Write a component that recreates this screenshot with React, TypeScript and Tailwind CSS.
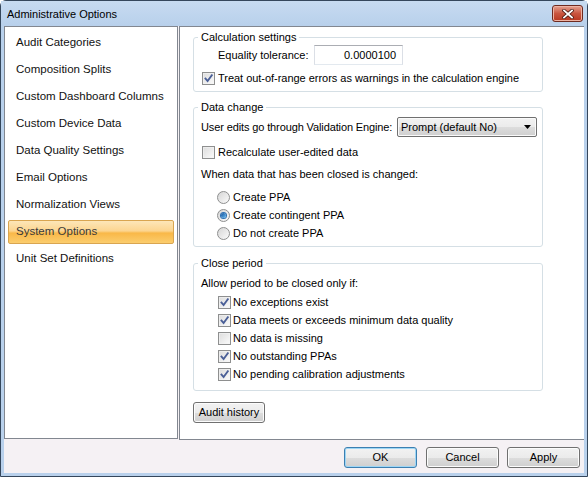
import React from "react";

const font = { fontFamily: '"Liberation Sans", Arial, sans-serif' };

function Check({ on }: { on: boolean }) {
  return (
    <span className="relative flex h-[13px] w-[13px] shrink-0 items-center justify-center border border-[#8e8f8f] bg-gradient-to-br from-[#dcdcdc] to-[#fbfbfb]">
      <span className="flex h-[11px] w-[11px] items-center justify-center border border-[#f4f4f4]/60">
        {on && (
          <svg width="11" height="11" viewBox="0 0 11 11" className="absolute left-[0px] top-[0px]">
            <path d="M2.5 5.5 L4.6 8 L8.8 2.3" fill="none" stroke="#4a5f97" strokeWidth="1.9" strokeLinecap="square" />
          </svg>
        )}
      </span>
    </span>
  );
}

function Radio({ on }: { on: boolean }) {
  return (
    <span className="flex h-[13px] w-[13px] shrink-0 items-center justify-center rounded-full border border-[#8e8f8f] bg-gradient-to-br from-[#d6d6d6] to-[#fbfbfb]">
      {on && (
        <span className="h-[5px] w-[5px] rounded-full bg-gradient-to-br from-[#0b4f9c] to-[#6fc0f2] ring-1 ring-[#2b6fb3]" />
      )}
    </span>
  );
}

function WinButton({ label, focus, w }: { label: string; focus?: boolean; w: string }) {
  return (
    <div
      className={`flex h-[21px] ${w} items-center justify-center rounded-[3px] border ${
        focus ? "border-[#3c7fb1] shadow-[inset_0_0_0_1px_#9ed6f5]" : "border-[#707070] shadow-[inset_0_0_0_1px_#fcfcfc]"
      } bg-[linear-gradient(#f2f2f2_0%,#ebebeb_50%,#dddddd_50%,#cfcfcf_100%)] text-[11px] text-black`}
    >
      {label}
    </div>
  );
}

const items = [
  "Audit Categories",
  "Composition Splits",
  "Custom Dashboard Columns",
  "Custom Device Data",
  "Data Quality Settings",
  "Email Options",
  "Normalization Views",
  "System Options",
  "Unit Set Definitions",
];

export default function App() {
  return (
    <div style={font} className="h-[477px] w-[588px] overflow-hidden bg-white">
      <div className="flex h-[477px] w-[588px] flex-col rounded-t-[6px] border border-[#35475c] bg-[#b9d1ec]">
        {/* title bar */}
        <div className="flex h-[25px] items-start justify-between bg-gradient-to-b from-[#c7dbf1] to-[#b8d0eb] pl-[6px] pr-[4px]">
          <span className="mt-[7px] text-[11px] leading-[13px] text-black">Administrative Options</span>
          <div className="mt-[4px] flex h-[17px] w-[31px] items-center justify-center rounded-[3px] border border-[#6e2a20] bg-gradient-to-b from-[#e4a191] via-[#c9553f] to-[#b8361f] shadow-[inset_0_0_0_1px_#eeb3a3]">
            <svg width="12" height="10" viewBox="0 0 12 10">
              <path d="M2 1.5 L10 8.5 M10 1.5 L2 8.5" stroke="#4a1a12" strokeWidth="3.4" strokeLinecap="square" />
              <path d="M2 1.5 L10 8.5 M10 1.5 L2 8.5" stroke="#ffffff" strokeWidth="1.8" strokeLinecap="square" />
            </svg>
          </div>
        </div>
        {/* content */}
        <div className="mx-[3px] flex h-[447px] w-[580px] flex-col bg-[#f5f1f4]">
          <div className="flex h-[414px] items-start gap-[1px]">
            {/* list */}
            <div className="flex h-[413px] w-[174px] flex-col gap-[3px] border border-[#828790] bg-white px-[3px] pt-[4px]">
              {items.map((t) => {
                const sel = t === "System Options";
                return (
                  <div
                    key={t}
                    className={`flex h-[24px] items-center rounded-[2px] border pl-[7px] text-[11.5px] ${
                      sel
                        ? "border-[#d9a550] bg-[linear-gradient(#fde6b8_0%,#fcd590_45%,#f9b848_55%,#fbcd6e_100%)] text-[#3a3a3a]"
                        : "border-transparent text-[#111111]"
                    }`}
                  >
                    {t}
                  </div>
                );
              })}
            </div>
            {/* right panel */}
            <div className="flex h-[414px] flex-1 flex-col border-y border-l border-[#828790] bg-white pl-[13px] pt-[3px] text-[11px] text-black">
              {/* Calculation settings */}
              <fieldset className="w-[350px] rounded-[3px] border border-[#d5dfe5] px-[4px] pb-[6px]">
                <legend className="px-[3px] leading-[14px]">Calculation settings</legend>
                <div className="mt-[1px] flex h-[20px] items-center pl-[20px]">
                  <span className="w-[96px]">Equality tolerance:</span>
                  <div className="flex h-[20px] w-[89px] items-center justify-end border border-[#dbdfe6] border-t-[#abadb3] border-b-[#e3e9ef] pr-[6px]">
                    0.0000100
                  </div>
                </div>
                <div className="mt-[6px] flex h-[14px] items-center gap-[3px] pl-[4px]">
                  <Check on />
                  <span className="whitespace-nowrap tracking-[-0.03px]">Treat out-of-range errors as warnings in the calculation engine</span>
                </div>
              </fieldset>
              {/* Data change */}
              <fieldset className="mt-[8px] w-[350px] rounded-[3px] border border-[#d5dfe5] px-[4px] pb-[4px]">
                <legend className="px-[3px] leading-[14px]">Data change</legend>
                <div className="mt-[3px] flex h-[20px] items-center pl-[3px]">
                  <span className="w-[196px] shrink-0 whitespace-nowrap tracking-[-0.12px]">User edits go through Validation Engine:</span>
                  <div className="flex h-[20px] w-[140px] shrink-0 items-center justify-between rounded-[2px] border border-[#707070] bg-[linear-gradient(#f2f2f2_0%,#ebebeb_50%,#dddddd_50%,#cfcfcf_100%)] pl-[3px] pr-[5px] shadow-[inset_0_0_0_1px_#fafafa]">
                    <span>Prompt (default No)</span>
                    <svg width="7" height="4" viewBox="0 0 7 4">
                      <path d="M0 0 H7 L3.5 4 Z" fill="#000" />
                    </svg>
                  </div>
                </div>
                <div className="mt-[8px] flex h-[14px] items-center gap-[3px] pl-[4px]">
                  <Check on={false} />
                  <span>Recalculate user-edited data</span>
                </div>
                <div className="mt-[8px] flex h-[14px] items-center pl-[3px]">
                  When data that has been closed is changed:
                </div>
                <div className="mt-[7px] flex flex-col pl-[19px]">
                  {[
                    ["Create PPA", false],
                    ["Create contingent PPA", true],
                    ["Do not create PPA", false],
                  ].map(([t, on]) => (
                    <div key={t as string} className="flex h-[18px] items-center gap-[3px]">
                      <Radio on={on as boolean} />
                      <span>{t as string}</span>
                    </div>
                  ))}
                </div>
              </fieldset>
              {/* Close period */}
              <fieldset className="mt-[9px] w-[350px] rounded-[3px] border border-[#d5dfe5] px-[4px] pb-[7px]">
                <legend className="px-[3px] leading-[14px]">Close period</legend>
                <div className="mt-[6px] flex h-[14px] items-center pl-[3px]">Allow period to be closed only if:</div>
                <div className="mt-[3px] flex flex-col pl-[20px]">
                  {[
                    ["No exceptions exist", true],
                    ["Data meets or exceeds minimum data quality", true],
                    ["No data is missing", false],
                    ["No outstanding PPAs", true],
                    ["No pending calibration adjustments", true],
                  ].map(([t, on]) => (
                    <div key={t as string} className="flex h-[18px] items-center gap-[2px]">
                      <Check on={on as boolean} />
                      <span>{t as string}</span>
                    </div>
                  ))}
                </div>
              </fieldset>
              <div className="mt-[11px]">
                <WinButton label="Audit history" w="w-[72px]" />
              </div>
            </div>
          </div>
          {/* bottom bar */}
          <div className="flex flex-1 items-start justify-end gap-[8px] pr-[4px] pt-[7px]">
            <WinButton label="OK" focus w="w-[73px]" />
            <div className="ml-[1px]">
              <WinButton label="Cancel" w="w-[73px]" />
            </div>
            <WinButton label="Apply" w="w-[73px]" />
          </div>
        </div>
      </div>
    </div>
  );
}
